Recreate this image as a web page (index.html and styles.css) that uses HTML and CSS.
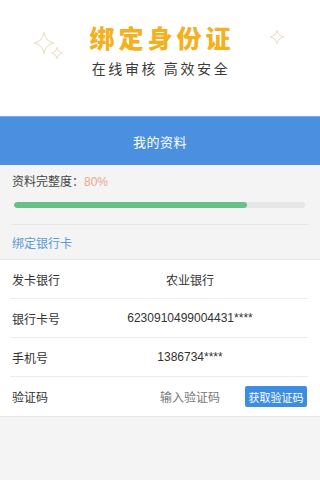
FILE: index.html
```html
<!DOCTYPE html>
<html lang="zh">
<head>
<meta charset="utf-8">
<link rel="stylesheet" href="styles.css">
</head>
<body>
<header class="hero">
  <svg class="spark spark-left" width="34" height="32" viewBox="0 0 34 32">
    <path d="M12 1 C13 8 16 11 22 12 C16 13 13 16 12 23 C11 16 8 13 2 12 C8 11 11 8 12 1 Z" fill="none" stroke="#ece2ca" stroke-width="1.2"/>
    <path d="M25 16 C25.6 20 27 21.4 31 22 C27 22.6 25.6 24 25 28 C24.4 24 23 22.6 19 22 C23 21.4 24.4 20 25 16 Z" fill="none" stroke="#ece2ca" stroke-width="1.1"/>
  </svg>
  <svg class="spark spark-right" width="16" height="16" viewBox="0 0 16 16">
    <path d="M8 1 C8.6 5 10.5 7 15 8 C10.5 9 8.6 11 8 15 C7.4 11 5.5 9 1 8 C5.5 7 7.4 5 8 1 Z" fill="none" stroke="#ece2ca" stroke-width="1.1"/>
  </svg>
  <h1 class="title">绑定身份证</h1>
  <p class="subtitle">在线审核 高效安全</p>
</header>
<div class="bar">我的资料</div>
<section class="profile">
  <div class="complete">资料完整度：<span class="pct">80%</span></div>
  <div class="track"><div class="fill" style="width:80%"></div></div>
  <div class="divider"></div>
  <div class="link">绑定银行卡</div>
</section>
<section class="card">
  <div class="row"><span class="label">发卡银行</span><span class="value">农业银行</span></div>
  <div class="row"><span class="label">银行卡号</span><span class="value num">6230910499004431****</span></div>
  <div class="row"><span class="label">手机号</span><span class="value num">1386734****</span></div>
  <div class="row last"><span class="label">验证码</span><span class="value input">输入验证码</span><button class="btn">获取验证码</button></div>
</section>
</body>
</html>
```
FILE: styles.css
```css
* { box-sizing: border-box; }
html, body { margin: 0; padding: 0; }
body {
  width: 320px;
  height: 480px;
  background: #f4f4f4;
  font-family: "Noto Sans CJK SC", "Noto Sans", sans-serif;
  color: #333;
  overflow: hidden;
}
.hero {
  position: relative;
  background: #fff;
  height: 116px;
  display: flex;
  flex-direction: column;
  align-items: center;
  padding-top: 21px;
}
.spark { position: absolute; }
.spark-left { left: 32px; top: 31px; }
.spark-right { left: 269px; top: 29px; }
.title {
  margin: 0;
  font-size: 25px;
  line-height: 32px;
  font-weight: 900;
  letter-spacing: 4px;
  padding-left: 4px;
  color: #f3b020;
}
.subtitle {
  margin: 1px 0 0;
  font-size: 14px;
  line-height: 28px;
  letter-spacing: 2.6px;
  padding-left: 2px;
  color: #3a3a3a;
}
.bar {
  height: 49px;
  background: #4a8fe0;
  border-top: 1px solid #77aeea;
  color: #fff;
  font-size: 13px;
  display: flex;
  align-items: center;
  justify-content: center;
  letter-spacing: 0.5px;
}
.profile {
  background: #f4f4f4;
  padding: 7px 12px 0;
  height: 95px;
  border-bottom: 1px solid #e6e6e6;
}
.complete {
  font-size: 12px;
  line-height: 18px;
  color: #444;
}
.pct { color: #e6a88c; font-family: "Liberation Sans", sans-serif; }
.track {
  margin: 11px 3px 0 2px;
  height: 6px;
  border-radius: 3px;
  background: #e6e6e6;
  overflow: hidden;
}
.fill { height: 100%; background: #66c088; border-radius: 3px; }
.divider {
  margin-top: 16px;
  height: 1px;
  background: #e4e4e4;
}
.link {
  margin-top: 9px;
  font-size: 12px;
  line-height: 18px;
  color: #5b9ad6;
}
.card {
  background: #fff;
  padding: 0 12px 0 10px;
  border-bottom: 1px solid #e6e6e6;
}
.row {
  height: 39px;
  display: flex;
  align-items: center;
  border-bottom: 1px solid #ececec;
  font-size: 12px;
  padding-left: 2px;
}
.row.last { border-bottom: none; }
.label { width: 60px; color: #333; }
.value { flex: 1; text-align: center; color: #333; }
.num { font-family: "Liberation Sans", sans-serif; font-size: 12px; }
.input { text-align: right; padding-right: 25px; color: #777; }
.btn {
  width: 62px;
  height: 21px;
  border: none;
  border-radius: 2px;
  background: #3d8ee0;
  color: #fff;
  font-family: "Noto Sans CJK SC", sans-serif;
  font-size: 11px;
  padding: 0;
  margin-right: 1px;
}
```
